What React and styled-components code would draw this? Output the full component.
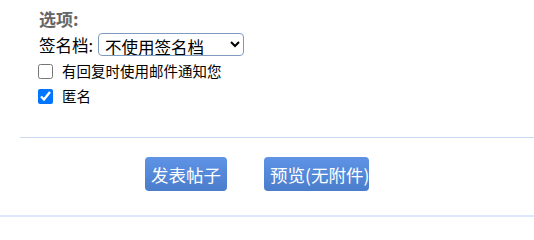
import React from "react";
import styled, { createGlobalStyle } from "styled-components";

const Global = createGlobalStyle`
  html, body { margin: 0; padding: 0; background: #fff; }
  body { font-family: "Noto Sans CJK SC", "Noto Sans", sans-serif; color: #000; }
`;

const Page = styled.div`
  width: 534px;
  height: 217px;
  display: flex;
  flex-direction: column;
  border-bottom: 2px solid #dde8fb;
  box-sizing: border-box;
`;

const Options = styled.div`
  padding: 7px 0 0 38px;
  display: flex;
  flex-direction: column;
`;

const Title = styled.div`
  font-size: 17px;
  font-weight: bold;
  color: #666;
  line-height: 24px;
  padding-left: 1px;
`;

const Row = styled.label`
  display: flex;
  align-items: center;
  font-size: ${(p) => p.$fs || 14.5}px;
  line-height: 20px;
  height: ${(p) => p.$h || 25}px;
  padding-left: ${(p) => p.$pl || 0}px;
`;

const Select = styled.select`
  margin-left: 5px;
  width: 146px;
  height: 23px;
  font-size: 16.5px;
  font-family: "Noto Sans CJK SC", sans-serif;
  border: 1px solid #7f9cc0;
  border-radius: 4px;
  padding: 0 0 0 2px;
  background: #fff;
  color: #000;
`;

const Check = styled.input`
  width: 15px;
  height: 15px;
  margin: 0 9px 0 0;
  accent-color: #0075ff;
`;

const Rule = styled.hr`
  margin: 29px 0 0 20px;
  border: none;
  border-top: 1px solid #c9d8ee;
`;

const Buttons = styled.div`
  display: flex;
  gap: 37px;
  padding: 19px 0 0 145px;
`;

const Button = styled.button`
  width: ${(p) => p.$w}px;
  height: 34px;
  padding: 0 0 0 6px;
  display: flex;
  align-items: center;
  white-space: nowrap;
  overflow: visible;
  border: none;
  border-radius: 4px;
  background: linear-gradient(#5e93e6, #4a7dcb);
  color: #fff;
  font-size: 17.5px;
  font-family: "Noto Sans CJK SC", sans-serif;
`;

export default function App() {
  return (
    <Page>
      <Global />
      <Options>
        <Title>选项:</Title>
        <Row $h={27} $fs={16.5} $pl={1}>
          签名档:
          <Select defaultValue="0">
            <option value="0">不使用签名档</option>
          </Select>
        </Row>
        <Row $h={26}>
          <Check type="checkbox" />
          有回复时使用邮件通知您
        </Row>
        <Row $h={24}>
          <Check type="checkbox" defaultChecked />
          匿名
        </Row>
      </Options>
      <Rule />
      <Buttons>
        <Button $w={82}>发表帖子</Button>
        <Button $w={105}>预览(无附件)</Button>
      </Buttons>
    </Page>
  );
}
